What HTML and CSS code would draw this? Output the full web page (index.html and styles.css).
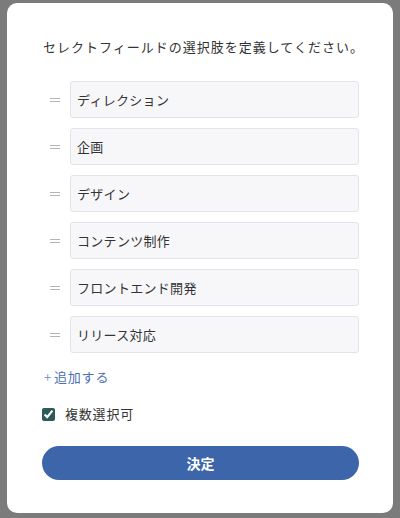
FILE: index.html
```html
<!DOCTYPE html>
<html lang="ja">
<head>
    <meta charset="UTF-8">
    <meta name="viewport" content="width=device-width, initial-scale=1.0">
    <title>選択肢の定義</title>
    <link rel="stylesheet" href="styles.css">
</head>
<body>
    <div class="modal">
        <p class="lead">セレクトフィールドの選択肢を定義してください。</p>
        <div class="option-list">
            <div class="option-row">
                <span class="handle"><span class="handle-mark"></span></span>
                <input type="text" class="option-input" value="ディレクション">
            </div>
            <div class="option-row">
                <span class="handle"><span class="handle-mark"></span></span>
                <input type="text" class="option-input" value="企画">
            </div>
            <div class="option-row">
                <span class="handle"><span class="handle-mark"></span></span>
                <input type="text" class="option-input" value="デザイン">
            </div>
            <div class="option-row">
                <span class="handle"><span class="handle-mark"></span></span>
                <input type="text" class="option-input" value="コンテンツ制作">
            </div>
            <div class="option-row">
                <span class="handle"><span class="handle-mark"></span></span>
                <input type="text" class="option-input" value="フロントエンド開発">
            </div>
            <div class="option-row">
                <span class="handle"><span class="handle-mark"></span></span>
                <input type="text" class="option-input" value="リリース対応">
            </div>
        </div>
        <a class="add-link" href="#"><span class="plus">+</span>追加する</a>
        <label class="multi">
            <input type="checkbox" checked>
            <span>複数選択可</span>
        </label>
        <button type="button" class="submit">決定</button>
    </div>
</body>
</html>
```

FILE: styles.css
```css
body {
    margin: 0;
    padding: 0;
    background-color: #7b7b7b;
    font-family: "Noto Sans CJK JP", "Noto Sans", sans-serif;
    font-size: 13px;
    color: #333;
}
.modal {
    box-sizing: border-box;
    width: 386px;
    height: 510px;
    margin: 3px 7px 0;
    padding: 34px 34px 0 35px;
    background: white;
    border-radius: 10px;
}
.lead {
    margin: 0 0 0 1px;
    line-height: 20px;
    letter-spacing: 1px;
    white-space: nowrap;
    color: #333;
}
.option-list {
    margin-top: 24px;
    display: flex;
    flex-direction: column;
    gap: 10px;
}
.option-row {
    display: flex;
    align-items: center;
}
.handle {
    width: 28px;
    display: flex;
    align-items: center;
}
.handle-mark {
    width: 10px;
    height: 2px;
    margin-left: 8px;
    border-top: 1px solid #b4b4b4;
    border-bottom: 1px solid #b4b4b4;
}
.option-input {
    flex: 1;
    box-sizing: border-box;
    height: 37px;
    padding: 0 6px;
    border: 1px solid #e3e3ea;
    border-radius: 3px;
    background-color: #f7f7fa;
    font-family: inherit;
    font-size: 13px;
    letter-spacing: 0.3px;
    color: #333;
}
.add-link {
    display: block;
    margin-top: 14px;
    margin-left: 2px;
    line-height: 20px;
    letter-spacing: 0.8px;
    color: #4d70b3;
    text-decoration: none;
}
.plus {
    color: #8099c8;
    margin-right: 2px;
}
.multi {
    display: flex;
    align-items: center;
    margin-top: 17px;
    line-height: 20px;
    letter-spacing: 0.8px;
}
.multi input {
    width: 13px;
    height: 13px;
    margin: 0 10px 0 0;
    accent-color: #2c5a5b;
}
.submit {
    display: block;
    width: 100%;
    height: 34px;
    margin-top: 22px;
    border: none;
    border-radius: 17px;
    background-color: #3d65a9;
    color: white;
    font-family: inherit;
    font-size: 14px;
    font-weight: bold;
    cursor: pointer;
}
```
